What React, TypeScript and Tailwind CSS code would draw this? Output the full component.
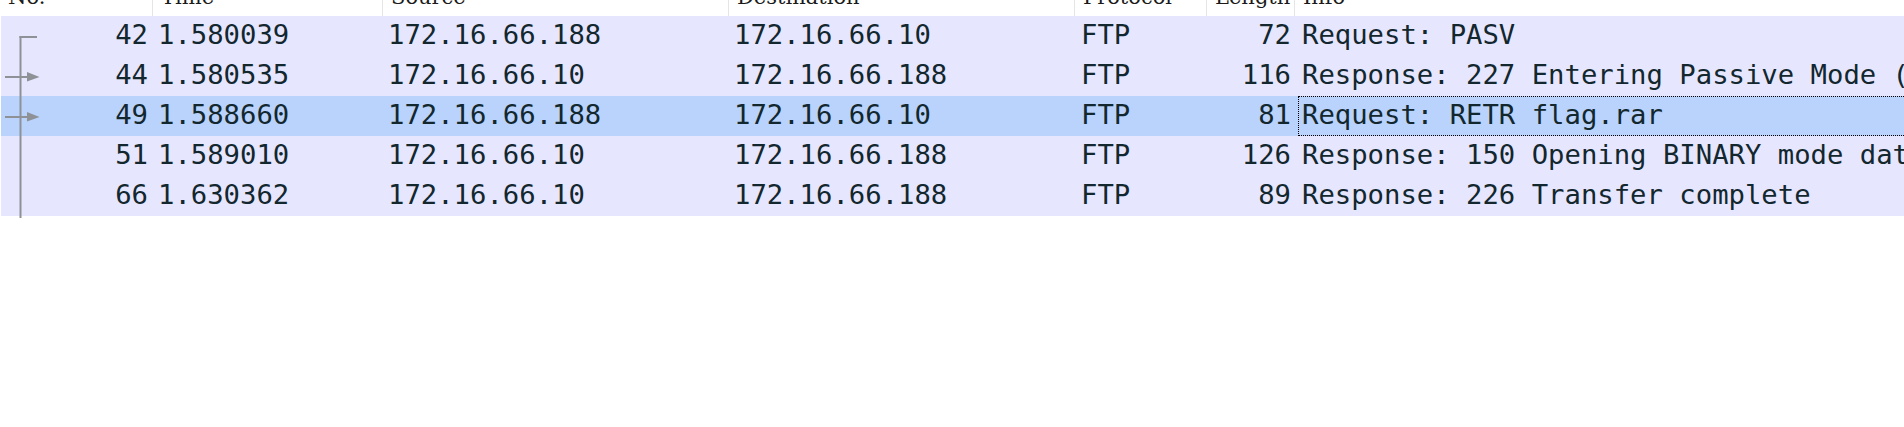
import React from 'react'

type Packet = {
  no: string
  time: string
  src: string
  dst: string
  proto: string
  len: string
  info: string
  selected?: boolean
}

const packets: Packet[] = [
  { no: '42', time: '1.580039', src: '172.16.66.188', dst: '172.16.66.10', proto: 'FTP', len: '72', info: 'Request: PASV' },
  { no: '44', time: '1.580535', src: '172.16.66.10', dst: '172.16.66.188', proto: 'FTP', len: '116', info: 'Response: 227 Entering Passive Mode (172,16,66,10,19,137)' },
  { no: '49', time: '1.588660', src: '172.16.66.188', dst: '172.16.66.10', proto: 'FTP', len: '81', info: 'Request: RETR flag.rar', selected: true },
  { no: '51', time: '1.589010', src: '172.16.66.10', dst: '172.16.66.188', proto: 'FTP', len: '126', info: 'Response: 150 Opening BINARY mode data connection for flag.rar (1052 bytes)' },
  { no: '66', time: '1.630362', src: '172.16.66.10', dst: '172.16.66.188', proto: 'FTP', len: '89', info: 'Response: 226 Transfer complete' },
]

const mono = { fontFamily: '"DejaVu Sans Mono", "Liberation Mono", monospace' }
const serif = { fontFamily: '"DejaVu Serif", "Liberation Serif", serif' }

function HeaderCell({ label, className }: { label: string; className: string }) {
  return (
    <div className={`h-4 shrink-0 overflow-hidden border-r border-[#e5e5e5] pl-2 ${className}`}>
      <div className="mt-[-13px] whitespace-nowrap text-[21px] leading-none text-[#1a1a1a]" style={serif}>
        {label}
      </div>
    </div>
  )
}

// conversation tree drawn in the No. column
function TreeLines() {
  return (
    <svg className="pointer-events-none absolute left-0 top-4" width="44" height="204" viewBox="0 0 44 204">
      <g fill="#8e9297">
        <rect x="19.5" y="20" width="2" height="182" />
        <rect x="19.5" y="20" width="17.5" height="2" />
        <rect x="5" y="60" width="23" height="2" />
        <polygon points="27,56 39.5,61 27,65.5" />
        <rect x="5" y="100" width="23" height="2" />
        <polygon points="27,96 39.5,101 27,105.5" />
      </g>
    </svg>
  )
}

export default function App() {
  return (
    <div className="relative h-[427px] w-[1904px] overflow-hidden bg-white">
      {/* Header */}
      <div className="flex h-4 bg-white">
        <HeaderCell label="No." className="w-[153px]" />
        <HeaderCell label="Time" className="w-[230px]" />
        <HeaderCell label="Source" className="w-[346px]" />
        <HeaderCell label="Destination" className="w-[346px]" />
        <HeaderCell label="Protocol" className="w-[132px]" />
        <HeaderCell label="Length" className="w-[88px]" />
        <div className="h-4 flex-1 overflow-hidden pl-2">
          <div className="mt-[-13px] whitespace-nowrap text-[21px] leading-none text-[#1a1a1a]" style={serif}>
            Info
          </div>
        </div>
      </div>

      {/* Packet rows */}
      <div className="pl-px text-[27.25px] leading-[38px] text-[#12272e]" style={mono}>
        {packets.map((p) => (
          <div key={p.no} className={`flex h-10 whitespace-nowrap ${p.selected ? 'bg-[#b9d3fc]' : 'bg-[#e7e6ff]'}`}>
            <div className="w-[152px] shrink-0 pr-[5px] text-right">{p.no}</div>
            <div className="w-[230px] shrink-0 pl-[5px]">{p.time}</div>
            <div className="w-[346px] shrink-0 pl-[5px]">{p.src}</div>
            <div className="w-[346px] shrink-0 pl-[5px]">{p.dst}</div>
            <div className="w-[132px] shrink-0 pl-[6px]">{p.proto}</div>
            <div className="w-[88px] shrink-0 pr-[4px] text-right">{p.len}</div>
            <div className="min-w-0 flex-1 overflow-hidden">
              {p.selected ? (
                <div className="ml-[3px] h-10 w-[700px] border border-dotted border-black pl-[3px] leading-[36px]">
                  {p.info}
                </div>
              ) : (
                <div className="pl-[7px]">{p.info}</div>
              )}
            </div>
          </div>
        ))}
      </div>

      <TreeLines />
    </div>
  )
}
